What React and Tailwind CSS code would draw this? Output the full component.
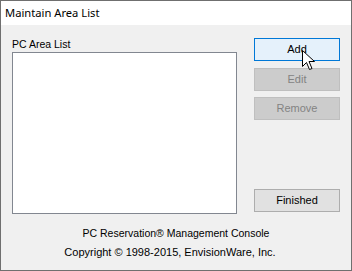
import React from "react";

function Cursor() {
  return (
    <svg
      className="absolute left-[301px] top-[49px]"
      width="14"
      height="21"
      viewBox="0 0 14 21"
    >
      <path
        d="M0.5 0.5 L0.5 16.5 L4.5 12.5 L7.5 19.5 L10 18.5 L7 11.5 L12.5 11.5 Z"
        fill="#ffffff"
        stroke="#000000"
        strokeWidth="1"
        strokeLinejoin="miter"
      />
    </svg>
  );
}

function Btn({ children, kind }) {
  const cls =
    kind === "hover"
      ? "bg-[#e5f1fb] border-[#0078d7] text-black"
      : kind === "disabled"
      ? "bg-[#cccccc] border-[#bfbfbf] text-[#838383]"
      : "bg-[#e1e1e1] border-[#adadad] text-black";
  return (
    <div
      className={`h-[23px] w-[86px] border flex items-center justify-center text-[11px] leading-[13px] ${cls}`}
    >
      {children}
    </div>
  );
}

export default function App() {
  return (
    <div
      className="relative w-[352px] h-[271px] border border-[#6f6f6f] bg-[#f0f0f0] flex flex-col overflow-hidden"
      style={{ fontFamily: '"Liberation Sans", Arial, sans-serif' }}
    >
      <div
        className="h-[24px] bg-white flex items-center pl-[4px] text-[11.2px] text-black shrink-0"
        style={{ fontFamily: '"Noto Sans", "Open Sans", sans-serif' }}
      >
        Maintain Area List
      </div>
      <div className="flex pt-[13px] pl-[11px] gap-[17px]">
        <div className="flex flex-col">
          <div className="h-[14px] text-[10.5px] leading-[13px] text-black">
            PC Area List
          </div>
          <div className="h-[162px] w-[225px] bg-white border border-[#828790]" />
        </div>
        <div className="flex flex-col h-[174px]">
          <Btn kind="hover">Add</Btn>
          <div className="mt-[7px]">
            <Btn kind="disabled">Edit</Btn>
          </div>
          <div className="mt-[6px]">
            <Btn kind="disabled">Remove</Btn>
          </div>
          <div className="mt-auto">
            <Btn>Finished</Btn>
          </div>
        </div>
      </div>
      <div className="mt-[10px] flex flex-col items-center leading-[19px] text-black">
        <div className="text-[10.5px]">PC Reservation® Management Console</div>
        <div className="text-[11px] pr-[12px]">
          Copyright © 1998-2015, EnvisionWare, Inc.
        </div>
      </div>
      <Cursor />
    </div>
  );
}
